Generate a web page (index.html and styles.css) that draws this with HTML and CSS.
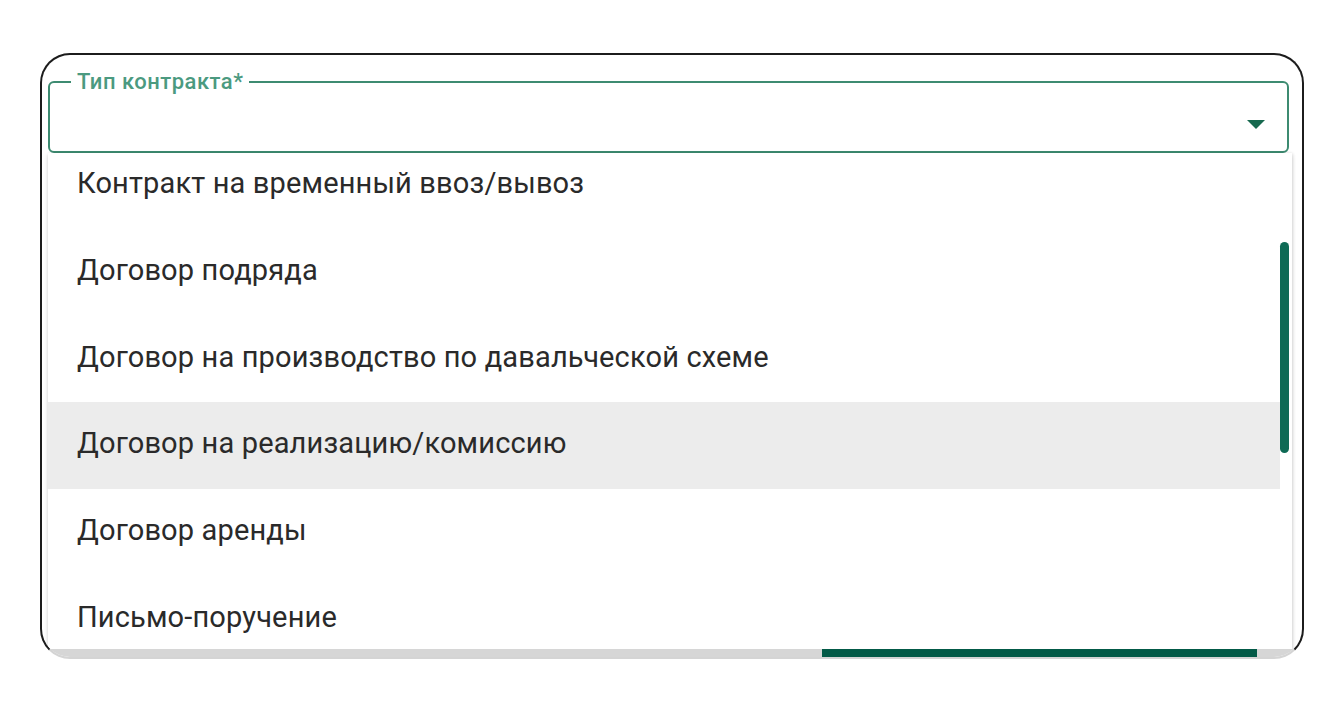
FILE: index.html
```html
<!DOCTYPE html>
<html lang="ru">
<head>
<meta charset="utf-8">
<title>Тип контракта</title>
<link rel="stylesheet" href="styles.css">
</head>
<body>
<div class="frame">
  <fieldset class="field">
    <legend class="field-label">Тип контракта*</legend>
    <div class="field-body">
      <svg class="arrow" width="18" height="9" viewBox="0 0 18 9" aria-hidden="true"><polygon points="0,0 18,0 9,9" fill="#17694f"/></svg>
    </div>
  </fieldset>
  <div class="menu">
    <div class="menu-viewport">
      <ul class="options">
        <li class="option">Контракт на временный ввоз/вывоз</li>
        <li class="option">Договор подряда</li>
        <li class="option">Договор на производство по давальческой схеме</li>
        <li class="option option-active">Договор на реализацию/комиссию</li>
        <li class="option">Договор аренды</li>
        <li class="option">Письмо-поручение</li>
      </ul>
    </div>
    <div class="scrollbar"><div class="thumb"></div></div>
  </div>
  <div class="under">
    <div class="under-button"></div>
  </div>
</div>
</body>
</html>
```
FILE: styles.css
```css
html, body {
  margin: 0;
  padding: 0;
  background: #ffffff;
}
body {
  font-family: Roboto, "Noto Sans", "Liberation Sans", sans-serif;
  padding-top: 53px;
  padding-left: 40px;
}
.frame {
  box-sizing: border-box;
  width: 1264px;
  height: 606px;
  border: 2px solid #1c1c1c;
  border-bottom: 2px solid #d4d4d4;
  border-radius: 30px;
  overflow: hidden;
  background: #ffffff;
  display: flex;
  flex-direction: column;
  padding-left: 6px;
  padding-right: 13px;
}
.field {
  box-sizing: border-box;
  margin: 16px 0 0 0;
  padding: 0 0 0 21px;
  height: 82px;
  border: 2px solid #3d8b71;
  border-radius: 6px;
  flex: none;
}
.field-label {
  padding: 0 6px;
  font-size: 22px;
  font-weight: 500;
  line-height: 22px;
  color: #4b9a80;
  letter-spacing: 0.5px;
}
.field-body {
  display: flex;
  justify-content: flex-end;
  align-items: center;
  height: 58px;
  padding-right: 22px;
}
.arrow {
  display: block;
  margin-top: 4px;
}
.menu {
  flex: none;
  height: 496px;
  display: flex;
  box-shadow: 0 2px 4px rgba(0, 0, 0, 0.18), 1px 0 3px rgba(0, 0, 0, 0.08);
  background: #ffffff;
  margin-right: -3px;
}
.menu-viewport {
  flex: 1;
  overflow: hidden;
}
.options {
  list-style: none;
  margin: -11px 0 0 0;
  padding: 0;
}
.option {
  box-sizing: border-box;
  height: 86.7px;
  display: flex;
  align-items: center;
  padding: 0 0 4px 29px;
  font-size: 29px;
  color: #2a2a2a;
  letter-spacing: 0.15px;
}
.option-active {
  background: #ececec;
}
.scrollbar {
  flex: none;
  width: 12px;
}
.thumb {
  width: 9px;
  height: 211px;
  margin-top: 89px;
  border-radius: 5px;
  background: #0e6a55;
}
.under {
  flex: none;
  height: 8px;
  margin-left: -6px;
  margin-right: -13px;
  background: #d6d6d6;
  display: flex;
  padding-left: 780px;
}
.under-button {
  width: 435px;
  height: 8px;
  background: #035a47;
}
```
